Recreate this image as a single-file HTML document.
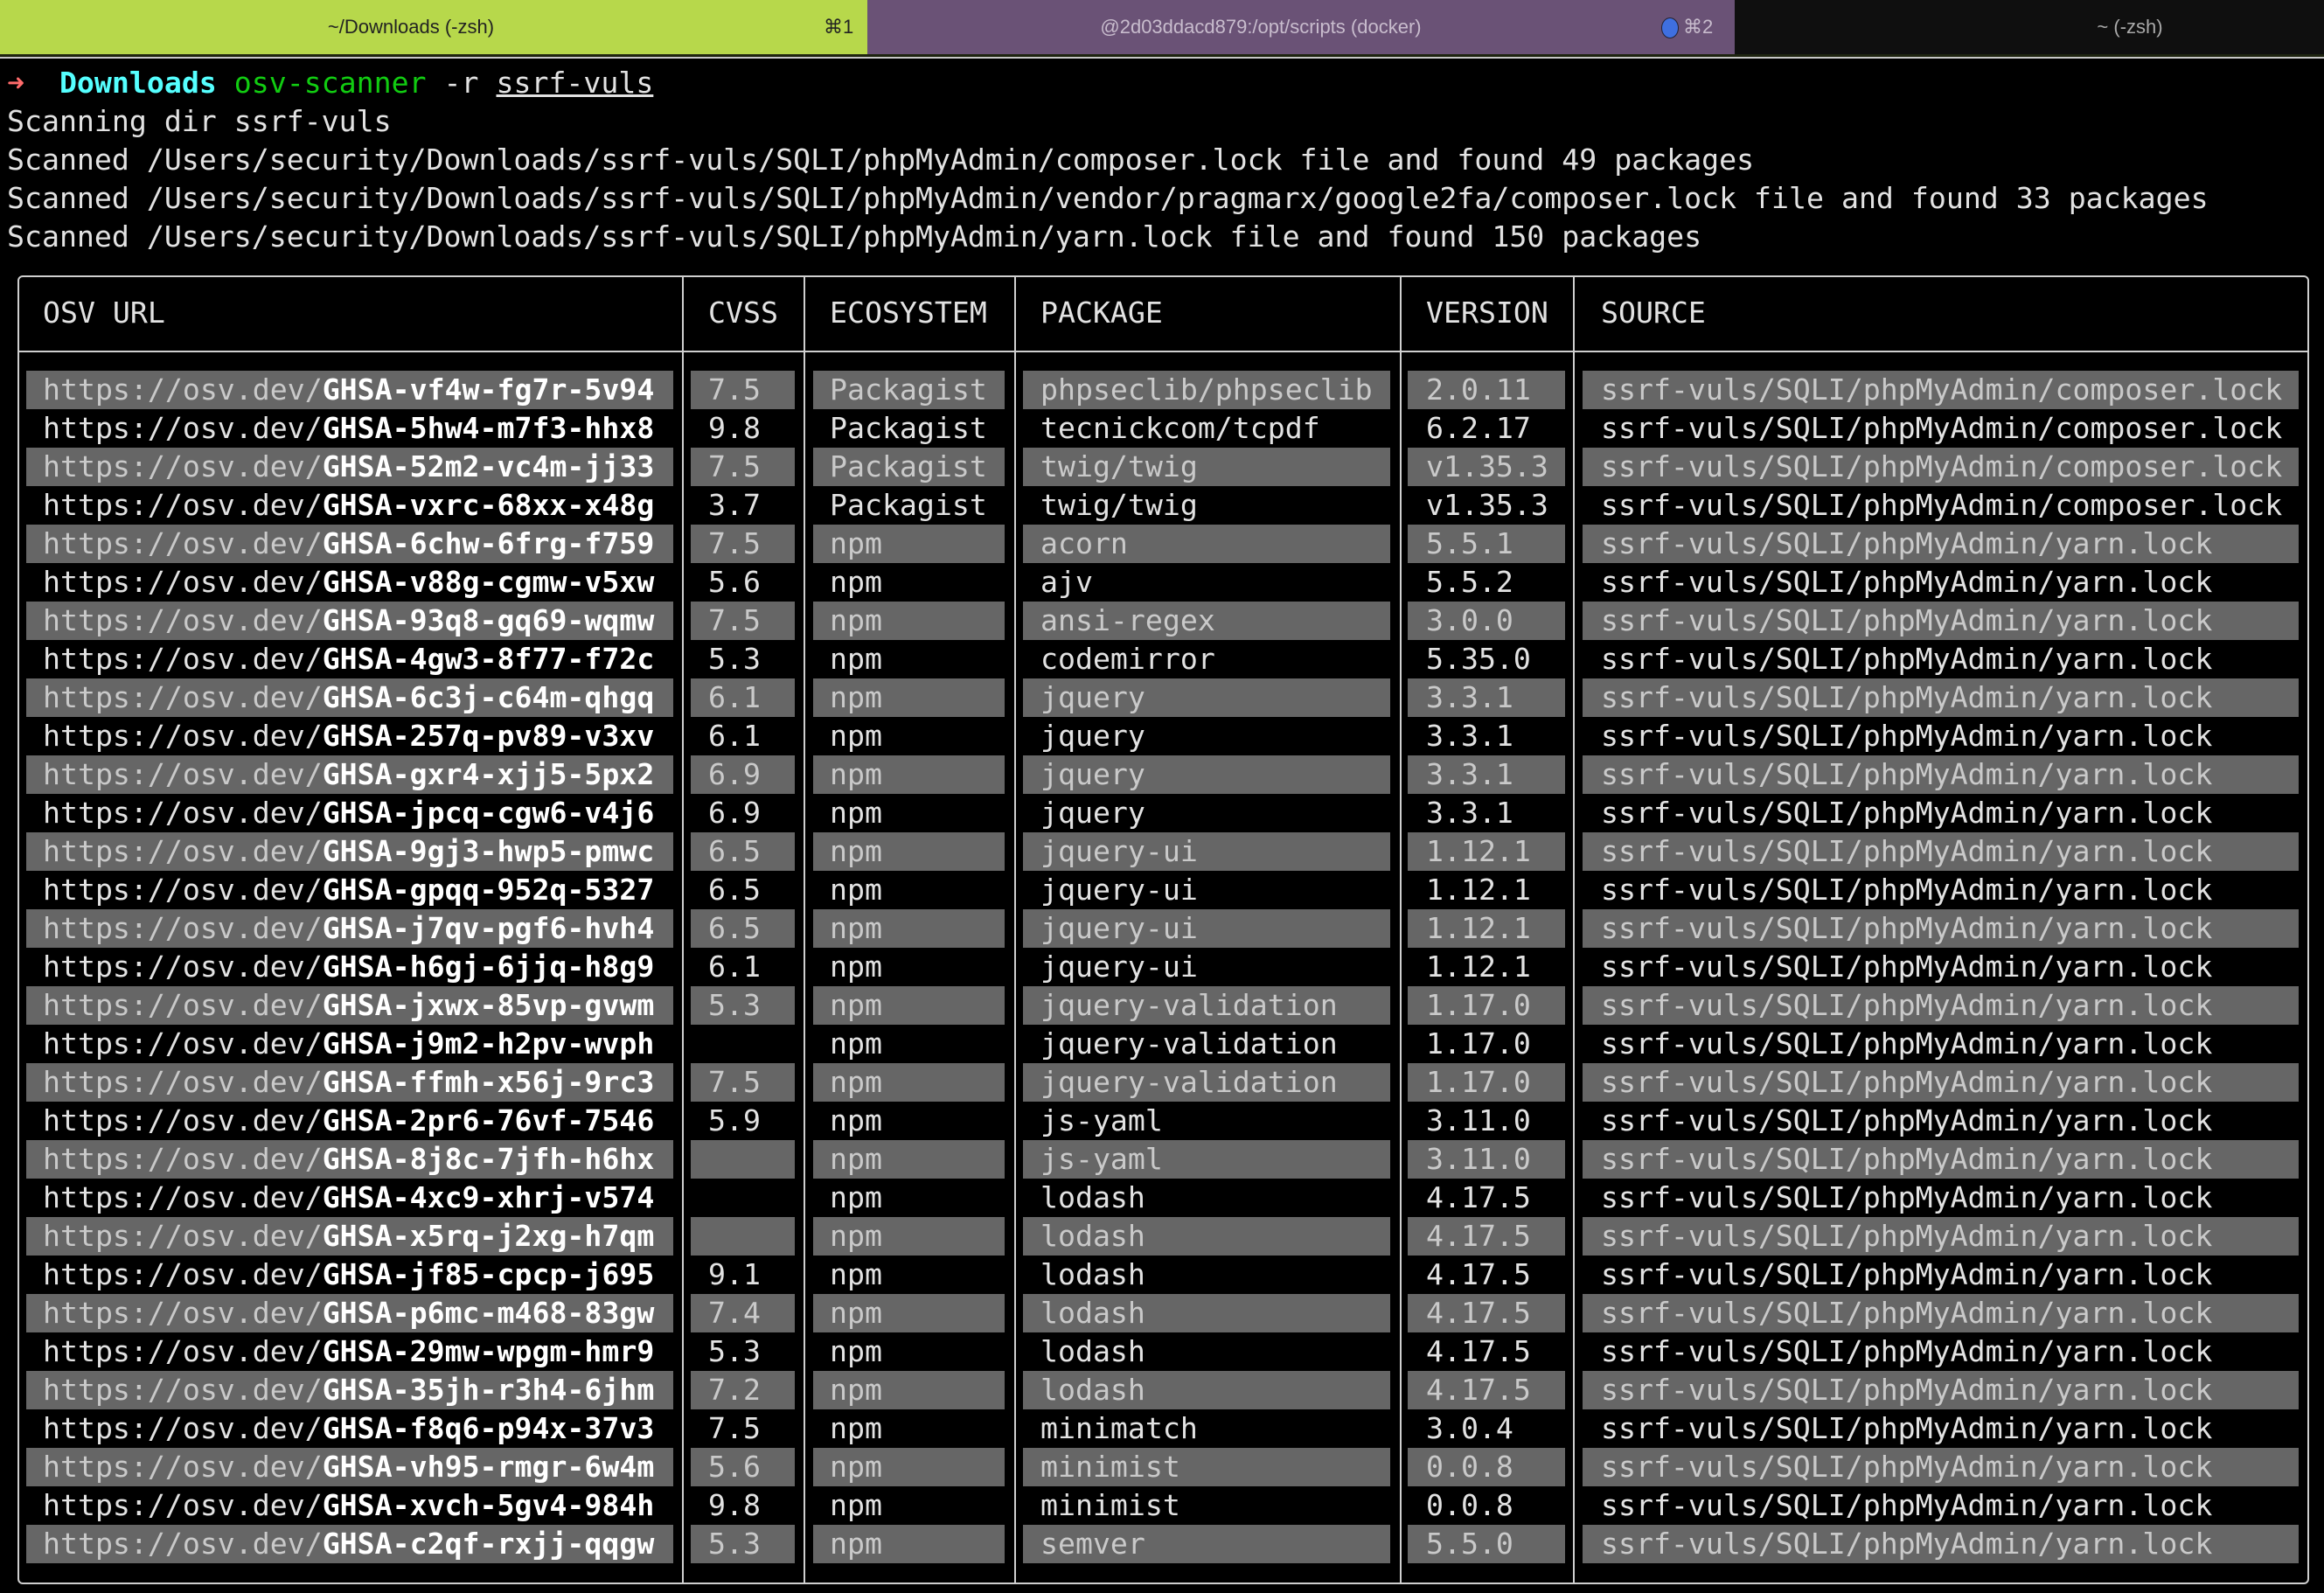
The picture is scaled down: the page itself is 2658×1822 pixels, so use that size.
<!DOCTYPE html>
<html><head><meta charset="utf-8"><style>
html,body{margin:0;padding:0;background:#000;width:2658px;height:1822px;overflow:hidden}
body{position:relative;font-family:"DejaVu Sans Mono","Liberation Mono",monospace;color:#e2e2e2}
.tab{position:absolute;top:0;height:62px;font-family:"Liberation Sans",sans-serif;font-size:22px;line-height:62px}
.t{position:absolute;white-space:pre;font-size:33.2px;line-height:44px;letter-spacing:0px}
.hl{position:absolute;background:#666;height:44px}
.v{position:absolute;background:#cfcfcf;width:2px}
.h{position:absolute;background:#cfcfcf;height:2px}
b{font-weight:bold;color:#fff}
.g{color:#c9c9c9}
</style></head><body>
<div class="tab" style="left:0;width:992px;background:#b7d84b;color:#222">
<span style="position:absolute;left:0;width:940px;text-align:center">~/Downloads (-zsh)</span>
<span style="position:absolute;left:942px">⌘1</span></div>
<div class="tab" style="left:992px;width:992px;background:#6a5276;color:#c8bccd">
<span style="position:absolute;left:0;width:900px;text-align:center">@2d03ddacd879:/opt/scripts (docker)</span>
<span style="position:absolute;left:908px;top:20px;width:18px;height:22px;border-radius:50%;background:#3f6fe0;border:1px solid #223"></span>
<span style="position:absolute;left:933px">⌘2</span></div>
<div class="tab" style="left:1984px;width:674px;background:#0f0f0f;color:#aaa">
<span style="position:absolute;left:0;width:904px;text-align:center">~ (-zsh)</span></div>
<div style="position:absolute;left:0;top:62px;width:2658px;height:3px;background:#1e2410"></div>
<div style="position:absolute;left:0;top:65px;width:2658px;height:2px;background:#c8c8c8"></div>

<div class="t" style="left:8px;top:73px"><span style="color:#ff6b6b">➜</span>  <span style="color:#5ff;font-weight:bold">Downloads</span> <span style="color:#1c1">osv-scanner</span> -r <span style="text-decoration:underline">ssrf-vuls</span></div>
<div class="t" style="left:8px;top:117px">Scanning dir ssrf-vuls</div>
<div class="t" style="left:8px;top:161px">Scanned /Users/security/Downloads/ssrf-vuls/SQLI/phpMyAdmin/composer.lock file and found 49 packages</div>
<div class="t" style="left:8px;top:205px">Scanned /Users/security/Downloads/ssrf-vuls/SQLI/phpMyAdmin/vendor/pragmarx/google2fa/composer.lock file and found 33 packages</div>
<div class="t" style="left:8px;top:249px">Scanned /Users/security/Downloads/ssrf-vuls/SQLI/phpMyAdmin/yarn.lock file and found 150 packages</div>

<div style="position:absolute;left:20px;top:315px;width:2617px;height:1493px;border:2px solid #cfcfcf;border-radius:6px"></div>
<div class="h" style="left:20px;top:401px;width:2619px"></div>
<div class="v" style="left:780px;top:315px;height:1495px"></div>
<div class="v" style="left:919px;top:315px;height:1495px"></div>
<div class="v" style="left:1160px;top:315px;height:1495px"></div>
<div class="v" style="left:1601px;top:315px;height:1495px"></div>
<div class="v" style="left:1799px;top:315px;height:1495px"></div>
<div class="t" style="left:49px;top:336px">OSV URL</div>
<div class="t" style="left:810px;top:336px">CVSS</div>
<div class="t" style="left:949px;top:336px">ECOSYSTEM</div>
<div class="t" style="left:1190px;top:336px">PACKAGE</div>
<div class="t" style="left:1631px;top:336px">VERSION</div>
<div class="t" style="left:1831px;top:336px">SOURCE</div>
<div id="rows"></div>
<script>
var C="ssrf-vuls/SQLI/phpMyAdmin/composer.lock",Y="ssrf-vuls/SQLI/phpMyAdmin/yarn.lock";
var R=[["vf4w-fg7r-5v94","7.5","Packagist","phpseclib/phpseclib","2.0.11",C],
["5hw4-m7f3-hhx8","9.8","Packagist","tecnickcom/tcpdf","6.2.17",C],
["52m2-vc4m-jj33","7.5","Packagist","twig/twig","v1.35.3",C],
["vxrc-68xx-x48g","3.7","Packagist","twig/twig","v1.35.3",C],
["6chw-6frg-f759","7.5","npm","acorn","5.5.1",Y],
["v88g-cgmw-v5xw","5.6","npm","ajv","5.5.2",Y],
["93q8-gq69-wqmw","7.5","npm","ansi-regex","3.0.0",Y],
["4gw3-8f77-f72c","5.3","npm","codemirror","5.35.0",Y],
["6c3j-c64m-qhgq","6.1","npm","jquery","3.3.1",Y],
["257q-pv89-v3xv","6.1","npm","jquery","3.3.1",Y],
["gxr4-xjj5-5px2","6.9","npm","jquery","3.3.1",Y],
["jpcq-cgw6-v4j6","6.9","npm","jquery","3.3.1",Y],
["9gj3-hwp5-pmwc","6.5","npm","jquery-ui","1.12.1",Y],
["gpqq-952q-5327","6.5","npm","jquery-ui","1.12.1",Y],
["j7qv-pgf6-hvh4","6.5","npm","jquery-ui","1.12.1",Y],
["h6gj-6jjq-h8g9","6.1","npm","jquery-ui","1.12.1",Y],
["jxwx-85vp-gvwm","5.3","npm","jquery-validation","1.17.0",Y],
["j9m2-h2pv-wvph","","npm","jquery-validation","1.17.0",Y],
["ffmh-x56j-9rc3","7.5","npm","jquery-validation","1.17.0",Y],
["2pr6-76vf-7546","5.9","npm","js-yaml","3.11.0",Y],
["8j8c-7jfh-h6hx","","npm","js-yaml","3.11.0",Y],
["4xc9-xhrj-v574","","npm","lodash","4.17.5",Y],
["x5rq-j2xg-h7qm","","npm","lodash","4.17.5",Y],
["jf85-cpcp-j695","9.1","npm","lodash","4.17.5",Y],
["p6mc-m468-83gw","7.4","npm","lodash","4.17.5",Y],
["29mw-wpgm-hmr9","5.3","npm","lodash","4.17.5",Y],
["35jh-r3h4-6jhm","7.2","npm","lodash","4.17.5",Y],
["f8q6-p94x-37v3","7.5","npm","minimatch","3.0.4",Y],
["vh95-rmgr-6w4m","5.6","npm","minimist","0.0.8",Y],
["xvch-5gv4-984h","9.8","npm","minimist","0.0.8",Y],
["c2qf-rxjj-qqgw","5.3","npm","semver","5.5.0",Y]];
var H=[[30,770],[790,909],[930,1149],[1170,1590],[1610,1790],[1810,2629]];
var X=[49,810,949,1190,1631,1831],s="";
R.forEach(function(r,i){var y=424+i*44,hl=i%2==0;
if(hl)H.forEach(function(h){s+='<div class="hl" style="left:'+h[0]+'px;top:'+y+'px;width:'+(h[1]-h[0])+'px"></div>';});
var cl=hl?' g':'';
s+='<div class="t'+cl+'" style="left:'+X[0]+'px;top:'+y+'px">https://osv.dev/<b>GHSA-'+r[0]+'</b></div>';
for(var k=1;k<6;k++)s+='<div class="t'+cl+'" style="left:'+X[k]+'px;top:'+y+'px">'+r[k]+'</div>';});
document.getElementById("rows").innerHTML=s;
</script>
</body></html>
